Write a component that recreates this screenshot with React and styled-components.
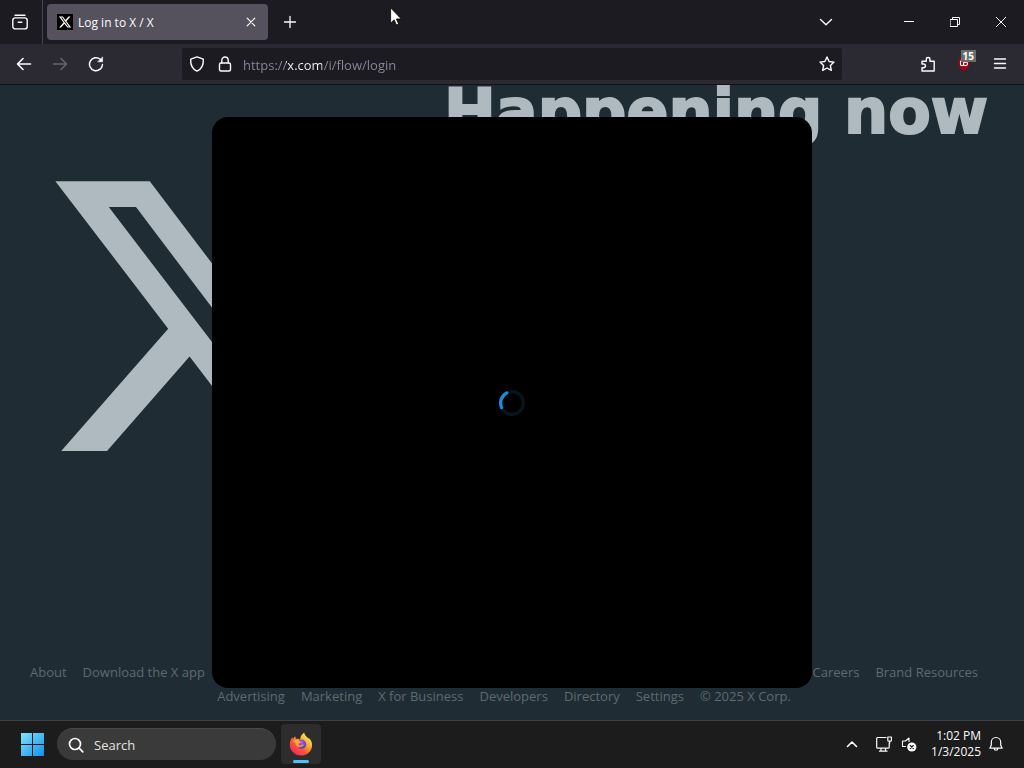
import React from "react";
import styled, { createGlobalStyle } from "styled-components";

const GlobalStyle = createGlobalStyle`
  * { box-sizing: border-box; }
  body { margin: 0; background: #202c33; }
  button, input { font: inherit; color: inherit; border: 0; padding: 0; margin: 0; background: none; outline: none; }
  h1 { margin: 0; }
`;

const Desktop = styled.div`
  min-height: 100vh;
  display: flex;
  flex-direction: column;
  overflow: hidden;
  position: relative;
  font-family: "Open Sans", "Noto Sans", sans-serif;
  color: #fbfbfe;
`;

const Glyph = styled.svg`
  display: block;
  flex: none;
  width: ${(p) => p.$size || 16}px;
  height: ${(p) => p.$size || 16}px;
  fill: none;
  stroke: currentColor;
  stroke-width: ${(p) => p.$weight || 1.4};
  stroke-linecap: round;
  stroke-linejoin: round;
`;

const IconButton = styled.button`
  flex: none;
  width: ${(p) => p.$width || 36}px;
  height: 36px;
  display: flex;
  align-items: center;
  justify-content: center;
  position: relative;
  color: ${(p) => (p.$dim ? "#67666f" : "#fbfbfe")};
`;

const TabStrip = styled.header`
  height: 44px;
  display: flex;
  align-items: center;
  background: #1c1b22;
  padding-left: 2px;
`;

const ViewSection = styled.div`
  width: 41px;
  height: 44px;
  display: flex;
  align-items: center;
  border-right: 1px solid #45444e;
`;

const Tab = styled.div`
  width: 221px;
  height: 36px;
  margin: 0 4px;
  padding: 0 8px 0 10px;
  display: flex;
  align-items: center;
  border-radius: 4px;
  background: #55525e;
  font-size: 12px;
`;

const TabTitle = styled.span`
  flex: 1;
  margin-left: 5px;
  white-space: nowrap;
`;

const Favicon = styled.svg`
  display: block;
  width: 16px;
  height: 16px;
`;

const Spacer = styled.div`
  flex: 1;
`;

const WindowControls = styled.div`
  display: flex;
  margin-left: 42px;
`;

const Toolbar = styled.nav`
  height: 41px;
  display: flex;
  align-items: center;
  padding: 0 6px;
  background: #2b2a33;
  border-bottom: 1px solid #0f1216;
`;

const AddressBar = styled.div`
  flex: 1;
  height: 32px;
  margin: 0 68px;
  padding-left: 1px;
  display: flex;
  align-items: center;
  border-radius: 2px;
  background: #1c1b22;
`;

const AddressInput = styled.input`
  flex: 1;
  min-width: 0;
  height: 24px;
  margin-left: 4px;
  padding-top: 2px;
  font-size: 13px;
  line-height: 22px;
  color: transparent;
  background-image: linear-gradient(to right, #8b8a92 43px, #fbfbfe 43px, #fbfbfe 79px, #8b8a92 79px);
  background-clip: text;
  -webkit-background-clip: text;
`;

const Badge = styled.span`
  position: absolute;
  top: 4px;
  right: 6px;
  padding: 0 2px;
  background: #6b6b6b;
  color: #ffffff;
  font-size: 10px;
  font-weight: 700;
  line-height: 12px;
`;

const Viewport = styled.main`
  flex: 1;
  position: relative;
  display: flex;
  flex-direction: column;
  justify-content: space-between;
  overflow: hidden;
  background: #202c33;
`;

const Hero = styled.div`
  display: flex;
  justify-content: space-between;
  align-items: flex-start;
  padding: 0 36px 0 38px;
`;

const HeroLogo = styled.svg`
  flex: none;
  display: block;
  width: 332px;
  height: 332px;
  margin-top: 65px;
  fill: #aeb9c0;
`;

const Headline = styled.h1`
  flex: 1;
  display: flex;
  justify-content: flex-end;
  white-space: nowrap;
  color: #aeb9c0;
  font-family: "DejaVu Sans", Inter, sans-serif;
  font-size: 62px;
  font-weight: 700;
  line-height: 53px;
  -webkit-text-stroke: 2px #aeb9c0;
`;

const FooterLinks = styled.footer`
  padding: 0 46px 12px 30px;
  font-family: "Open Sans", sans-serif;
  font-size: 13px;
  line-height: 24px;
  color: #5d6a72;
`;

const LinkRow = styled.div`
  display: flex;
  justify-content: ${(p) => p.$justify};
  gap: 16px;
  white-space: nowrap;
`;

const LinkGroup = styled.div`
  display: flex;
  gap: 16px;
`;

const FooterLink = styled.a`
  color: inherit;
  text-decoration: none;
`;

const Overlay = styled.div`
  position: absolute;
  inset: 0;
  padding: 32px 0;
  display: flex;
  justify-content: center;
`;

const Dialog = styled.div`
  width: 600px;
  max-width: 100%;
  display: flex;
  align-items: center;
  justify-content: center;
  border-radius: 16px;
  background: #000000;
`;

const Taskbar = styled.footer`
  height: 48px;
  display: flex;
  align-items: center;
  padding: 0 13px 1px 12px;
  background: #1c1c1c;
  border-top: 1px solid #3b4145;
`;

const SearchBox = styled.label`
  width: 219px;
  height: 32px;
  margin: 0 5px;
  padding: 0 11px;
  display: flex;
  align-items: center;
  gap: 10px;
  border-radius: 16px;
  background: #3a3a3a;
  border-top: 1px solid #4a4a4a;
  font-size: 13px;
`;

const SearchInput = styled.input`
  flex: 1;
  min-width: 0;
  &::placeholder { color: #e2e2e2; opacity: 1; }
`;

const AppButton = styled.button`
  width: 40px;
  height: 40px;
  display: flex;
  align-items: center;
  justify-content: center;
  position: relative;
  border-radius: 4px;
  background: ${(p) => (p.$active ? "#2d2d2d" : "transparent")};
  &::after {
    content: "";
    display: ${(p) => (p.$active ? "block" : "none")};
    position: absolute;
    bottom: 1px;
    left: 12px;
    right: 12px;
    height: 3px;
    border-radius: 2px;
    background: #4cc2ff;
  }
`;

const Clock = styled.button`
  width: 59px;
  text-align: right;
  white-space: nowrap;
  display: flex;
  flex-direction: column;
  align-items: flex-end;
  font-size: 12px;
  line-height: 16px;
`;

const Pointer = styled.svg`
  position: absolute;
  left: 390px;
  top: 7px;
  width: 12px;
  height: 19px;
`;

const X_PATH =
  "M18.244 2.25h3.308l-7.227 8.26 8.502 11.24H16.17l-5.214-6.817L4.99 21.75H1.68l7.73-8.835L1.254 2.25H8.08l4.713 6.231zm-1.161 17.52h1.833L7.084 4.126H5.117z";

const SECOND_ROW = ["Advertising", "Marketing", "X for Business", "Developers", "Directory", "Settings"];

function FirefoxLogo() {
  return (
    <svg width="24" height="24" viewBox="0 0 24 24" aria-hidden="true">
      <defs>
        <linearGradient id="flame" x1="0.85" y1="0.1" x2="0.2" y2="0.95">
          <stop offset="0" stopColor="#fff44f" />
          <stop offset="0.35" stopColor="#ffab2e" />
          <stop offset="0.65" stopColor="#ff5634" />
          <stop offset="1" stopColor="#f0256d" />
        </linearGradient>
        <radialGradient id="globe" cx="0.5" cy="0.3" r="0.7">
          <stop offset="0" stopColor="#9b5cff" />
          <stop offset="1" stopColor="#4b3ac2" />
        </radialGradient>
        <linearGradient id="tail" x1="0" y1="0" x2="1" y2="1">
          <stop offset="0" stopColor="#ffbd2f" />
          <stop offset="1" stopColor="#ff7a2d" />
        </linearGradient>
      </defs>
      <path
        fill="url(#flame)"
        d="M15.2.4c.3 2.200 1.600 3.300 2.800 4.600.6.6 1.200 1.300 1.600 2.100l.1-1.400c2.300 2.100 3.500 4.800 3.400 7.500-.3 6-5 10.400-11 10.400C5.800 23.600.8 18.900.8 12.600c0-2.900 1-5.300 2.600-7.300l.5 2C4.500 6.100 5.400 5 6.300 4.300c0 1.100.3 1.900.8 2.600 1.500-.2 2.900 0 4 .6C11.300 4.700 12.800 2 15.200.4z"
      />
      <circle cx="12.600" cy="12.200" r="4.600" fill="url(#globe)" />
      <path
        fill="url(#tail)"
        d="M4.400 9.200c1.800-1.400 4.300-1.500 6.200-.2.5.4 1.100.6 2 .6-.2 1-1.100 1.500-2.300 1.900-.7.3-.7.9-.4 1.500 1.100.6 2 .1 3.500-.4 1.200-.3 2 .2 1.800.7-.5.4-.9.3-1.600 1-1.600 1.500-4.600 1.400-6.200-.5-1-1-.9-2.600-.8-3.300-1 .1-1.800-.3-2.200-1.300z"
      />
    </svg>
  );
}

export default function App() {
  return (
    <Desktop>
      <GlobalStyle />
      <TabStrip>
        <ViewSection>
          <IconButton aria-label="Firefox View">
            <Glyph viewBox="0 0 16 16">
              <path d="M3 1.200h10" />
              <rect x="0.800" y="3.900" width="14.400" height="11" rx="2.500" />
              <path d="M6.200 8.200h3.600" />
            </Glyph>
          </IconButton>
        </ViewSection>
        <Tab>
          <Favicon viewBox="0 0 16 16">
            <rect width="16" height="16" fill="#000000" />
            <path d={X_PATH} fill="#ffffff" transform="translate(1.200 1.200) scale(0.570)" />
          </Favicon>
          <TabTitle>Log in to X / X</TabTitle>
          <IconButton $width={18} aria-label="Close tab">
            <Glyph $size={10} $weight={1.2} viewBox="0 0 10 10">
              <path d="M1.200 1.200l7.600 7.600M8.800 1.200L1.200 8.800" />
            </Glyph>
          </IconButton>
        </Tab>
        <IconButton aria-label="New tab">
          <Glyph $weight={1.3} viewBox="0 0 16 16">
            <path d="M8 2.500v11M2.500 8h11" />
          </Glyph>
        </IconButton>
        <Spacer />
        <IconButton aria-label="List all tabs">
          <Glyph viewBox="0 0 16 16">
            <path d="M2.500 5.500L8 10.800l5.500-5.300" />
          </Glyph>
        </IconButton>
        <WindowControls>
          <IconButton $width={46} aria-label="Minimize">
            <Glyph $size={10} $weight={1} viewBox="0 0 10 10">
              <path d="M0 4.500h10" />
            </Glyph>
          </IconButton>
          <IconButton $width={46} aria-label="Restore">
            <Glyph $size={10} $weight={1} viewBox="0 0 10 10">
              <path d="M.5 2.500h7v7h-7zM2.500 2.500v-2h7v7h-2" />
            </Glyph>
          </IconButton>
          <IconButton $width={46} aria-label="Close">
            <Glyph $size={10} $weight={1} viewBox="0 0 10 10">
              <path d="M0 0l10 10M10 0L0 10" />
            </Glyph>
          </IconButton>
        </WindowControls>
      </TabStrip>

      <Toolbar>
        <IconButton aria-label="Back">
          <Glyph $weight={1.6} viewBox="0 0 16 16">
            <path d="M14.500 8H1.500M7 2.500L1.500 8 7 13.500" />
          </Glyph>
        </IconButton>
        <IconButton $dim aria-label="Forward">
          <Glyph $weight={1.5} viewBox="0 0 16 16">
            <path d="M1.500 8h13M9 2.500L14.500 8 9 13.500" />
          </Glyph>
        </IconButton>
        <IconButton aria-label="Reload">
          <Glyph $weight={1.5} viewBox="0 0 16 16">
            <path d="M14.500 8.500A6.500 6.500 0 1 1 12.300 3.300" />
            <path d="M14.600 1.200v4.600H10z" fill="currentColor" strokeWidth="0.6" />
          </Glyph>
        </IconButton>
        <AddressBar>
          <IconButton $width={28} aria-label="Tracking protection">
            <Glyph viewBox="0 0 16 16">
              <path d="M8 .9l6.300 2.300c.3 5.300-1.500 9.800-6.300 12C3.200 13 1.400 8.500 1.700 3.200z" />
            </Glyph>
          </IconButton>
          <IconButton $width={28} aria-label="Site security">
            <Glyph viewBox="0 0 16 16">
              <rect x="2.500" y="7" width="11" height="8" rx="1.500" />
              <path d="M4.800 7V4.200a3.200 3.200 0 0 1 6.400 0V7" />
            </Glyph>
          </IconButton>
          <AddressInput aria-label="Address" type="text" defaultValue="https://x.com/i/flow/login" spellCheck={false} />
          <IconButton $width={30} aria-label="Bookmark this page">
            <Glyph viewBox="0 0 16 16">
              <path d="M8 1l2.100 4.500 4.900.6-3.600 3.400.9 4.900L8 12l-4.300 2.400.9-4.900L1 6.100l4.900-.6z" />
            </Glyph>
          </IconButton>
        </AddressBar>
        <IconButton aria-label="Extensions">
          <Glyph viewBox="0 0 16 16">
            <path d="M2 8V5.200h4.300V3.300a1.800 1.800 0 0 1 3.600 0v1.900h4.300v9.800H2v-3.300h1.600a1.700 1.700 0 0 0 0-3.700z" />
          </Glyph>
        </IconButton>
        <IconButton aria-label="uBlock Origin">
          <Glyph viewBox="0 0 16 16" $weight={1.1}>
            <path d="M8 1l6 2c0 6-1.500 9.500-6 12-4.500-2.500-6-6-6-12z" fill="#9c0010" stroke="none" />
            <path d="M4.500 5v3.200c0 2 3 2 3 0V6.500m0 1.700c0 2 4 2 4-.4 0-2.200-3-2.200-4-.3" />
          </Glyph>
          <Badge>15</Badge>
        </IconButton>
        <IconButton aria-label="Open menu">
          <Glyph viewBox="0 0 16 16">
            <path d="M2.500 3h11M2.500 7.500h11M2.500 12h11" />
          </Glyph>
        </IconButton>
      </Toolbar>

      <Viewport>
        <Hero>
          <HeroLogo viewBox="0 0 24 24" aria-label="X">
            <path d={X_PATH} />
          </HeroLogo>
          <Headline>Happening now</Headline>
        </Hero>
        <FooterLinks>
          <LinkRow $justify="space-between">
            <LinkGroup>
              <FooterLink href="#about">About</FooterLink>
              <FooterLink href="#download">Download the X app</FooterLink>
            </LinkGroup>
            <LinkGroup>
              <FooterLink href="#careers">Careers</FooterLink>
              <FooterLink href="#brand">Brand Resources</FooterLink>
            </LinkGroup>
          </LinkRow>
          <LinkRow $justify="center">
            {SECOND_ROW.map((name) => (
              <FooterLink key={name} href="#">{name}</FooterLink>
            ))}
            <span>© 2025 X Corp.</span>
          </LinkRow>
        </FooterLinks>
        <Overlay>
          <Dialog role="dialog" aria-label="Log in" aria-busy="true">
            <svg width="26" height="26" viewBox="0 0 32 32" fill="none" strokeWidth="4" aria-hidden="true">
              <circle cx="16" cy="16" r="14" stroke="#08141d" />
              <path d="M3.200 21.600A14 14 0 0 1 9.600 3.500" stroke="#1d8bd8" strokeLinecap="round" />
            </svg>
          </Dialog>
        </Overlay>
      </Viewport>

      <Taskbar>
        <AppButton aria-label="Start">
          <svg width="23" height="23" viewBox="0 0 23 23" aria-hidden="true">
            <defs>
              <linearGradient id="win" x1="0" y1="0" x2="23" y2="23" gradientUnits="userSpaceOnUse">
                <stop offset="0" stopColor="#7fe3fd" />
                <stop offset="1" stopColor="#1490e8" />
              </linearGradient>
            </defs>
            <path fill="url(#win)" d="M0 0h11v11H0zM12 0h11v11H12zM0 12h11v11H0zM12 12h11v11H12z" />
          </svg>
        </AppButton>
        <SearchBox>
          <Glyph $weight={1.7} viewBox="0 0 16 16">
            <circle cx="7" cy="7" r="5.500" />
            <path d="M11.200 11.200l3.600 3.600" />
          </Glyph>
          <SearchInput type="text" placeholder="Search" aria-label="Search" />
        </SearchBox>
        <AppButton $active aria-label="Firefox">
          <FirefoxLogo />
        </AppButton>
        <Spacer />
        <IconButton $width={40} aria-label="Show hidden icons">
          <Glyph $size={12} $weight={1.6} viewBox="0 0 12 12">
            <path d="M1.500 8.500L6 4l4.500 4.500" />
          </Glyph>
        </IconButton>
        <IconButton $width={24} aria-label="Network">
          <Glyph $weight={1.2} viewBox="0 0 16 16">
            <path d="M10 1.500H1.500A1 1 0 0 0 .7 2.500v8.700a1 1 0 0 0 1 1h10.500a1 1 0 0 0 1-1V7M5 12.200v3M9.500 12.200v3M3.500 15.200h7.500" />
            <path d="M11.800 1h3.600v3.200a1 1 0 0 1-1 1h-1.600a1 1 0 0 1-1-1zM13.600 5.200v2.500" />
          </Glyph>
        </IconButton>
        <IconButton $width={26} aria-label="Volume muted">
          <Glyph $weight={1.1} viewBox="0 0 16 16">
            <path d="M8 5.500V2L4.500 5H1.500v5.500h3" />
            <circle cx="10.800" cy="11" r="4.600" fill="#ffffff" stroke="none" />
            <path d="M9.300 9.500l3 3M12.300 9.500l-3 3" stroke="#1c1c1c" />
          </Glyph>
        </IconButton>
        <Clock aria-label="Clock">
          <span>1:02 PM</span>
          <span>1/3/2025</span>
        </Clock>
        <IconButton $width={30} aria-label="Notifications">
          <Glyph $weight={1.2} viewBox="0 0 16 16">
            <path d="M8 1.500a4.700 4.700 0 0 0-4.700 4.700v3L1.800 12.200h12.400l-1.500-3v-3A4.700 4.700 0 0 0 8 1.500zM6.200 12.400a1.800 1.800 0 0 0 3.600 0" />
          </Glyph>
        </IconButton>
      </Taskbar>

      <Pointer viewBox="0 0 12 19" aria-hidden="true">
        <path d="M.6.800v15.400l3.500-3.400 2.300 5.300 2.300-1-2.300-5.100h4.900z" fill="#ffffff" stroke="#000000" strokeWidth="0.800" />
      </Pointer>
    </Desktop>
  );
}
